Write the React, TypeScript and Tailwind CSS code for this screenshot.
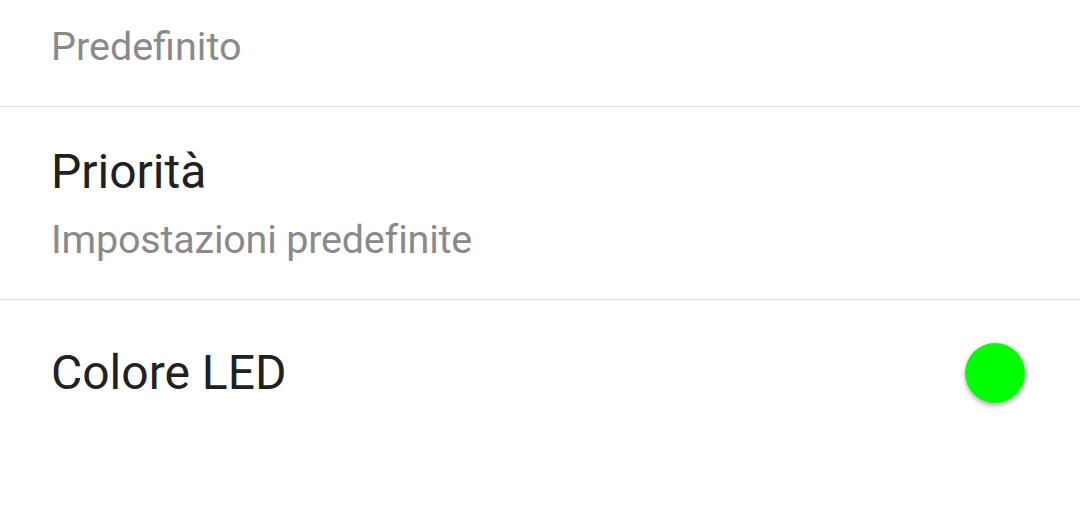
export default function App() {
  return (
    <div className="w-[1080px] h-[520px] overflow-hidden bg-white" style={{ fontFamily: 'Roboto, "Noto Sans", sans-serif' }}>
      <div className="pl-[51px] pr-[55px] pt-[24px] pb-[36px] border-b border-[#dcdcdc]">
        <div className="text-[39.5px] leading-[46px] text-[#8a8a8a]">Predefinito</div>
      </div>
      <div className="pl-[51px] pr-[55px] pt-[37px] pb-[36px] border-b border-[#dcdcdc]">
        <div className="text-[48px] leading-[56px] text-[#212121]">Priorità</div>
        <div className="mt-[17px] text-[39.5px] leading-[46px] tracking-[-0.2px] text-[#8a8a8a]">Impostazioni predefinite</div>
      </div>
      <div className="pl-[51px] pr-[55px] pt-[43px] pb-[45px] flex items-center justify-between">
        <div className="text-[48px] leading-[56px] text-[#212121]">Colore LED</div>
        <div className="w-[60px] h-[60px] rounded-full bg-[#00ff00] shadow-[0_3px_5px_rgba(0,0,0,0.3)]" />
      </div>
    </div>
  );
}
